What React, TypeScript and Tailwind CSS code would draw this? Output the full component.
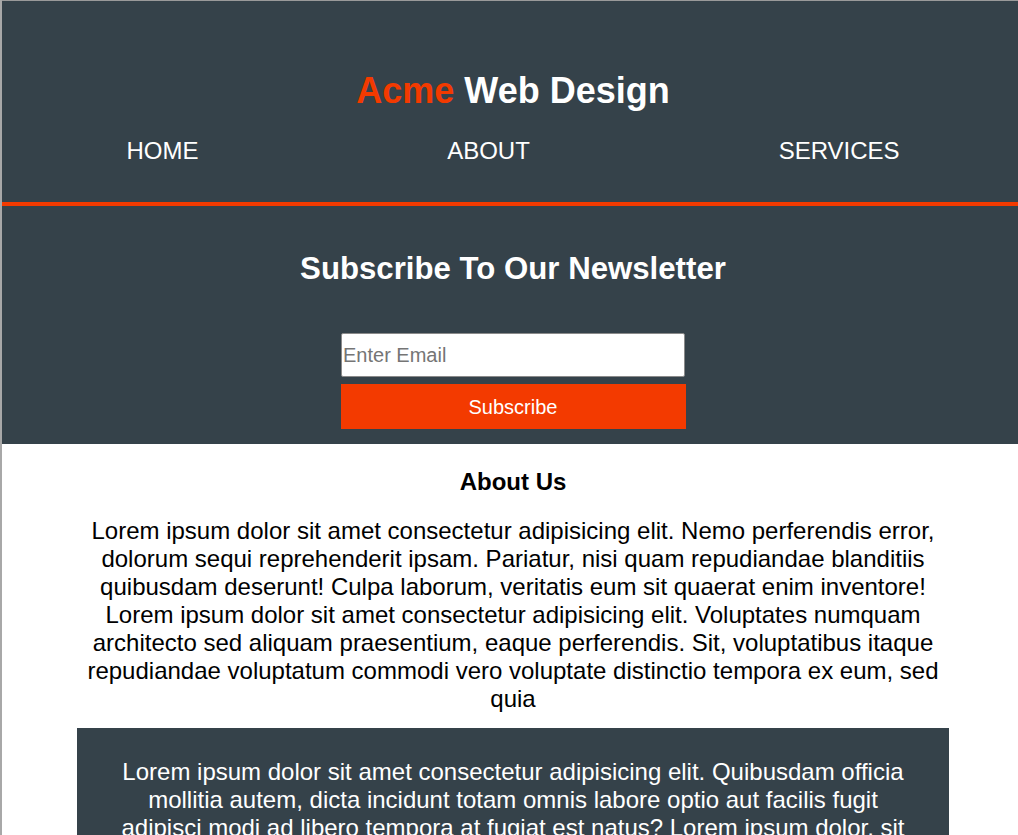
import React from "react";

export default function App() {
  return (
    <div
      className="flex w-[1018px] h-[835px] overflow-hidden bg-white"
      style={{ fontFamily: '"Liberation Sans", Arial, sans-serif' }}
    >
      <div className="w-[2px] shrink-0 bg-[#a8a8a8]" />
      <div className="w-[1022px] shrink-0 flex flex-col border-t border-[#9a9a9a]">
        <header className="bg-[#35424a] pt-[70px] pb-[37px] border-b-4 border-[#f33a00]">
          <h1 className="text-center text-[36px] leading-[40px] font-bold text-white">
            <span className="text-[#f33a00]">Acme</span> Web Design
          </h1>
          <nav className="mt-[26px]">
            <ul className="flex justify-around text-white text-[24px] leading-[28px] uppercase">
              <li>Home</li>
              <li>About</li>
              <li>Services</li>
            </ul>
          </nav>
        </header>

        <section className="bg-[#35424a] pt-[45px] pb-[15px] flex flex-col items-center">
          <h2 className="text-white font-bold text-[31.2px] leading-[36px]">
            Subscribe To Our Newsletter
          </h2>
          <input
            type="email"
            placeholder="Enter Email"
            className="mt-[46px] w-[344px] h-[44px] bg-white border border-[#8a8a8a] rounded-[2px] pl-[1px] text-[20px] placeholder:text-[#757575] outline-none"
            style={{ fontFamily: '"Liberation Sans", Arial, sans-serif' }}
          />
          <button className="mt-[7px] w-[345px] h-[45px] bg-[#f33a00] text-white text-[20px]">
            Subscribe
          </button>
        </section>

        <section className="pt-[24px] flex flex-col items-center">
          <h2 className="font-bold text-[24px] leading-[28px] text-black">About Us</h2>
          <p className="mt-[21px] w-[872px] text-center text-[24px] leading-[28px] text-black">
            Lorem ipsum dolor sit amet consectetur adipisicing elit. Nemo perferendis error,
            dolorum sequi reprehenderit ipsam. Pariatur, nisi quam repudiandae blanditiis
            quibusdam deserunt! Culpa laborum, veritatis eum sit quaerat enim inventore!
            Lorem ipsum dolor sit amet consectetur adipisicing elit. Voluptates numquam
            architecto sed aliquam praesentium, eaque perferendis. Sit, voluptatibus itaque
            repudiandae voluptatum commodi vero voluptate distinctio tempora ex eum, sed
            quia
          </p>
          <div className="mt-[15px] w-[872px] bg-[#35424a] pt-[30px] pb-[30px] px-[30px]">
            <p className="text-center text-white text-[24px] leading-[28px]">
              Lorem ipsum dolor sit amet consectetur adipisicing elit. Quibusdam officia
              mollitia autem, dicta incidunt totam omnis labore optio aut facilis fugit
              adipisci modi ad libero tempora at fugiat est natus? Lorem ipsum dolor, sit
              amet consectetur adipisicing elit. Cumque, eveniet nobis placeat ipsa
              voluptatem eaque.
            </p>
          </div>
        </section>
      </div>
    </div>
  );
}
